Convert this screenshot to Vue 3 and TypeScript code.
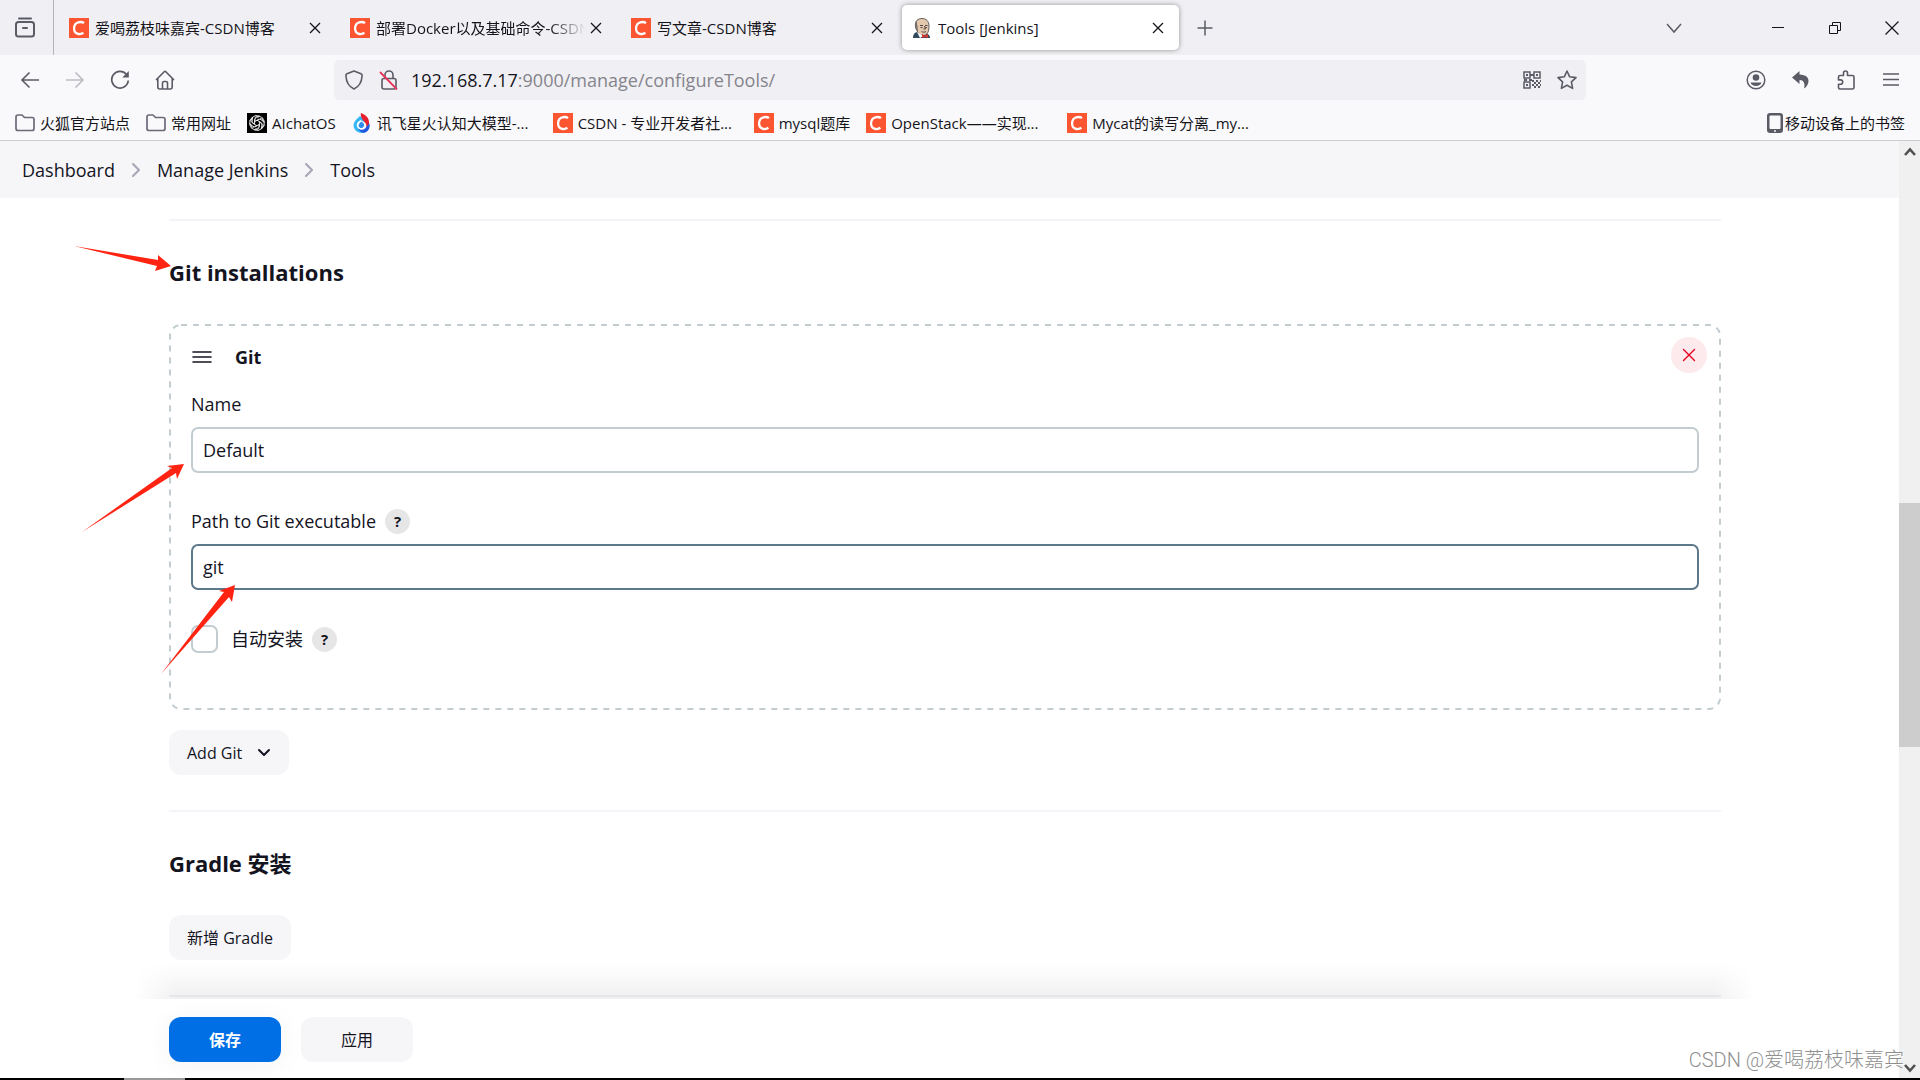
<script setup lang="ts">
import { ref } from 'vue'

interface Tab {
  title: string
  icon: 'csdn' | 'jenkins'
  active?: boolean
  faded?: boolean
}

interface Bookmark {
  title: string
  icon: 'folder' | 'openai' | 'spark' | 'csdn'
  long?: boolean
}

const tabs: Tab[] = [
  { title: '爱喝荔枝味嘉宾-CSDN博客', icon: 'csdn' },
  { title: '部署Docker以及基础命令-CSDN', icon: 'csdn', faded: true },
  { title: '写文章-CSDN博客', icon: 'csdn' },
  { title: 'Tools [Jenkins]', icon: 'jenkins', active: true },
]

const bookmarks: Bookmark[] = [
  { title: '火狐官方站点', icon: 'folder' },
  { title: '常用网址', icon: 'folder' },
  { title: 'AIchatOS', icon: 'openai' },
  { title: '讯飞星火认知大模型-...', icon: 'spark', long: true },
  { title: 'CSDN - 专业开发者社...', icon: 'csdn', long: true },
  { title: 'mysql题库', icon: 'csdn' },
  { title: 'OpenStack——实现...', icon: 'csdn', long: true },
  { title: 'Mycat的读写分离_my...', icon: 'csdn', long: true },
]

const crumbs = ['Dashboard', 'Manage Jenkins', 'Tools']

const name = ref('Default')
const gitPath = ref('git')
const autoInstall = ref(false)
</script>

<template>
  <div class="browser">
    <header class="tabstrip">
      <button class="recent" aria-label="Recent">
        <svg width="22" height="22" viewBox="0 0 22 22" fill="none" stroke="#5b5b66" stroke-width="2" stroke-linecap="round">
          <path d="M5 1.5h12" />
          <rect x="2" y="5" width="18" height="14.5" rx="2.5" />
          <path d="M9 11h4" />
        </svg>
      </button>
      <div class="tabs">
        <div v-for="tab in tabs" :key="tab.title" class="tab" :class="{ active: tab.active }">
          <svg v-if="tab.icon === 'csdn'" class="fav" viewBox="0 0 20 20">
            <rect width="20" height="20" fill="#fc5531" />
            <path d="M15 5.2C12.5 3.2 5.6 3.4 5.1 9.8c-.4 6.4 6 7.4 9.3 5" fill="none" stroke="#fff" stroke-width="2.3" />
          </svg>
          <svg v-else class="fav" viewBox="0 0 20 20">
            <path d="M1 20c0-4 2-6 5-6l8 1c3 1 4 3 4 5z" fill="#33495c" />
            <path d="M3.500 9C2.500 3 6 .5 10 .5S17 3 17 8c0 6-2 9-5 9.500S5 15 3.500 9z" fill="#e3c8ae" stroke="#413b39" stroke-width=".8" />
            <path d="M4 11C2.500 8 3 4 5 2.500 5 5 4.800 6 5.500 8L6 14z" fill="#77706b" />
            <path d="M8 7.500h3M13 7.500h2.500M9.500 13.500c1.500 1 3.500.8 4.500 0M12.500 8l1 3h-2M8.500 9.500h2M13.500 9.500h1.500" fill="none" stroke="#413b39" stroke-width=".9" />
            <path d="M5 14l3 6 3-2-4-3z" fill="#fff" />
            <path d="M10 16l3 1.500 3-1.500v4l-3-1-3 1z" fill="#d33833" />
          </svg>
          <span class="tab-title" :class="{ faded: tab.faded }">{{ tab.title }}</span>
          <button class="tab-close" aria-label="Close tab">
            <svg width="12" height="12" viewBox="0 0 12 12" stroke="#15141a" stroke-width="1.300"><path d="M1 1l10 10M11 1L1 11" /></svg>
          </button>
        </div>
        <button class="tab-new" aria-label="New tab">
          <svg width="16" height="16" viewBox="0 0 16 16" stroke="#5b5b66" stroke-width="1.500"><path d="M8 .5v15M.5 8h15" /></svg>
        </button>
      </div>
      <div class="window-controls">
        <button class="all-tabs" aria-label="List all tabs">
          <svg width="16" height="16" viewBox="0 0 16 16" fill="none" stroke="#5b5b66" stroke-width="1.500"><path d="M1 4l7 8 7-8" /></svg>
        </button>
        <button aria-label="Minimize">
          <svg width="14" height="14" viewBox="0 0 14 14" stroke="#15141a"><path d="M1 6.500h12" /></svg>
        </button>
        <button aria-label="Restore">
          <svg width="14" height="14" viewBox="0 0 14 14" fill="none" stroke="#15141a"><path d="M1.500 4.500h8v8h-8zM4.500 4.500v-3h8v8h-3" /></svg>
        </button>
        <button aria-label="Close">
          <svg width="14" height="14" viewBox="0 0 14 14" stroke="#15141a" stroke-width="1.200"><path d="M.5 .5l13 13M13.500 .5l-13 13" /></svg>
        </button>
      </div>
    </header>

    <div class="toolbar">
      <div class="tool-group">
        <button aria-label="Back">
          <svg width="20" height="20" viewBox="0 0 20 20" fill="none" stroke="#5b5b66" stroke-width="1.600"><path d="M19 10H2M9.500 2.500L2 10l7.500 7.500" /></svg>
        </button>
        <button aria-label="Forward">
          <svg width="20" height="20" viewBox="0 0 20 20" fill="none" stroke="#bcbcc3" stroke-width="1.600"><path d="M1 10h17M10.500 2.500L18 10l-7.500 7.500" /></svg>
        </button>
        <button aria-label="Reload">
          <svg width="20" height="20" viewBox="0 0 20 20" fill="none" stroke="#5b5b66" stroke-width="1.700">
            <path d="M16.500 4.500A8.300 8.300 0 1 0 18.300 10.500" />
            <path d="M18.800 1v6.500h-6.500z" fill="#5b5b66" stroke="none" />
          </svg>
        </button>
        <button aria-label="Home">
          <svg width="20" height="20" viewBox="0 0 20 20" fill="none" stroke="#5b5b66" stroke-width="1.600" stroke-linejoin="round">
            <path d="M1 10l8.200-8.300a1.200 1.200 0 0 1 1.600 0L19 10M2.800 8.500V17a2 2 0 0 0 2 2h10.400a2 2 0 0 0 2-2V8.500M7.500 19v-6a1.500 1.500 0 0 1 1.500-1.500h2a1.500 1.500 0 0 1 1.500 1.500v6" />
          </svg>
        </button>
      </div>

      <div class="urlbar">
        <svg class="shield" width="20" height="20" viewBox="0 0 20 20" fill="none" stroke="#5b5b66" stroke-width="1.600" stroke-linejoin="round">
          <path d="M10 1l7 2.800c1 .4 1.200 1 1.100 2-.4 6.200-3.100 11-8.100 13.200C5 16.800 2.300 12 1.900 5.800c-.1-1 .1-1.600 1.100-2z" />
        </svg>
        <svg class="lock" width="20" height="20" viewBox="0 0 20 20" fill="none" stroke="#5b5b66" stroke-width="1.600">
          <path d="M6 8V5a4 4 0 0 1 8 0v3" />
          <rect x="3" y="8.500" width="14" height="10.500" rx="2" />
          <path d="M1 2l17 17.500" stroke="#e8335b" stroke-width="1.800" />
        </svg>
        <span class="url">192.168.7.17<span class="url-rest">:9000/manage/configureTools/</span></span>
        <svg class="qr" width="18" height="18" viewBox="0 0 18 18" fill="none" stroke="#5b5b66" stroke-width="1.500">
          <path d="M1 1h6v6H1zM11 1h6v6h-6zM1 11h6v6H1z" />
          <path d="M3 4h2M13 4h2M3 14h2M7 4h4M1 9h3M6 9h3" stroke-width="2" />
          <path d="M9 10h9M9 14h9" stroke-width="2" stroke-dasharray="2 2" />
          <path d="M9 12h9M9 16h9" stroke-width="2" stroke-dasharray="2 2" stroke-dashoffset="2" />
        </svg>
        <svg width="20" height="20" viewBox="0 0 20 20" fill="none" stroke="#5b5b66" stroke-width="1.600" stroke-linejoin="round">
          <path d="M10 1l2.700 5.800 6.300.8-4.600 4.300 1.200 6.500L10 15.300l-5.600 3.100 1.200-6.500L1 7.600l6.300-.8z" />
        </svg>
      </div>

      <div class="tool-group">
        <button aria-label="Account">
          <svg width="20" height="20" viewBox="0 0 20 20" fill="#5b5b66">
            <circle cx="10" cy="10" r="8.800" fill="none" stroke="#5b5b66" stroke-width="1.500" />
            <circle cx="10" cy="7.500" r="3.300" />
            <path d="M4.500 12.500h11c-.5 2.200-3 3.500-5.500 3.500s-5-1.300-5.500-3.500z" />
          </svg>
        </button>
        <button aria-label="Undo">
          <svg width="20" height="20" viewBox="0 0 20 20" fill="#5b5b66">
            <path d="M8.500 1L1 7.500 8.500 14v-4c4 0 6 3 4.500 8.500 5.500-3.500 8-13.500-4.500-14z" />
          </svg>
        </button>
        <button aria-label="Extensions">
          <svg width="20" height="20" viewBox="0 0 20 20" fill="none" stroke="#5b5b66" stroke-width="1.600" stroke-linejoin="round">
            <path d="M2.500 8V7a1.500 1.500 0 0 1 1.500-1.500h3.500V3a2 2 0 0 1 4 0v2.500h5A1.500 1.500 0 0 1 18 7v10.500a1.500 1.500 0 0 1-1.500 1.500H4a1.500 1.500 0 0 1-1.500-1.500v-3.200h2a2.200 2.200 0 0 0 0-4.400h-2z" />
          </svg>
        </button>
        <button aria-label="Menu">
          <svg width="16" height="16" viewBox="0 0 16 16" stroke="#5b5b66" stroke-width="1.500"><path d="M0 2h16M0 7.500h16M0 13h16" /></svg>
        </button>
      </div>
    </div>

    <nav class="bookmarks">
      <a v-for="mark in bookmarks" :key="mark.title" class="bookmark" href="#">
        <svg v-if="mark.icon === 'folder'" class="fav" viewBox="0 0 20 20" fill="none" stroke="#6b6a77" stroke-width="1.700" stroke-linejoin="round">
          <path d="M1 15.500V4a2 2 0 0 1 2-2h4l2.500 2.500H17a2 2 0 0 1 2 2v9a2 2 0 0 1-2 2H3a2 2 0 0 1-2-2z" />
        </svg>
        <svg v-else-if="mark.icon === 'openai'" class="fav" viewBox="0 0 20 20" fill="none" stroke="#fff" stroke-width=".8">
          <rect width="20" height="20" fill="#000" stroke="none" />
          <path v-for="n in 6" :key="n" d="M8 9V5.500a3 3 0 0 1 5.200-1.800M8 5.500l4.500-2.300 3.500 2v3.500M10.500 7.500l4 2.300" :transform="`rotate(${n * 60} 10 10)`" />
        </svg>
        <svg v-else-if="mark.icon === 'spark'" class="fav" viewBox="0 0 20 20">
          <path d="M8 3C4 6.500 1.500 9 1.500 12.500A7.800 7.500 0 0 0 9.500 20a8 7.500 0 0 0 8-7.500c0-1-.2-2-.6-3z" fill="#35b7f5" />
          <path d="M14 11.500c.5 4-4 6-8 4.500 2 2.500 4 4 6.500 3.700 3.500-1 5.500-4 5-8.200l-.8-2z" fill="#2457e0" />
          <path d="M8.500 7C5.500 9 4.500 10.500 4.800 12.500c.5 3 2.700 4.300 5 4.300 3.500 0 5.500-3 4.500-6.500L10 8z" fill="#fff" />
          <path d="M9.500 8.500c-2.500 2-3.300 3.200-2.800 4.800.5 1.500 1.800 1.900 3 1.700 2.500-.5 3-3 1.800-4.700z" fill="#2f8df0" />
          <path d="M8.800 0c5.500 2 8.500 5 8.200 10-.3 1.500-1 2.800-2.300 3.500C15 9 8 7 8.800 0z" fill="#e9202d" />
        </svg>
        <svg v-else class="fav" viewBox="0 0 20 20">
          <rect width="20" height="20" fill="#fc5531" />
          <path d="M15 5.200C12.500 3.200 5.600 3.400 5.100 9.800c-.4 6.400 6 7.400 9.300 5" fill="none" stroke="#fff" stroke-width="2.300" />
        </svg>
        <span :class="{ long: mark.long }">{{ mark.title }}</span>
      </a>
      <a class="bookmark mobile" href="#">
        <svg width="16" height="20" viewBox="0 0 16 20">
          <rect width="16" height="20" rx="3" fill="#5b5b66" />
          <rect x="2.500" y="2.500" width="11" height="13.500" rx="1" fill="#f9f9fb" />
          <rect x="7" y="17.300" width="2" height="1.400" fill="#f9f9fb" />
        </svg>
        <span>移动设备上的书签</span>
      </a>
    </nav>

    <div class="viewport">
      <div class="page">
        <nav class="breadcrumbs">
          <template v-for="(crumb, i) in crumbs" :key="crumb">
            <svg v-if="i > 0" width="10" height="16" viewBox="0 0 10 16" fill="none" stroke="#a5a5b5" stroke-width="2" stroke-linecap="round" stroke-linejoin="round">
              <path d="M2 2l6 6-6 6" />
            </svg>
            <a href="#">{{ crumb }}</a>
          </template>
        </nav>

        <main>
          <section>
            <h2>Git installations</h2>
            <div class="card">
              <svg class="card-outline" fill="none" stroke="#c3ccd1" stroke-width="2" stroke-dasharray="6 6">
                <rect x="1" y="1" rx="11" />
              </svg>
              <div class="card-head">
                <svg width="22" height="14" viewBox="0 0 22 14" stroke="#14141f" stroke-width="1.600" stroke-linecap="round"><path d="M2 2h18M2 7h18M2 12h18" /></svg>
                <strong>Git</strong>
                <button class="remove" aria-label="Remove Git">
                  <svg width="14" height="14" viewBox="0 0 14 14" stroke="#e6001f" stroke-width="1.400" stroke-linecap="round"><path d="M1.500 1.500l11 11M12.500 1.500l-11 11" /></svg>
                </button>
              </div>
              <div class="field">
                <div class="field-label"><label for="git-name">Name</label></div>
                <input id="git-name" v-model="name" type="text" />
              </div>
              <div class="field">
                <div class="field-label">
                  <label for="git-path">Path to Git executable</label>
                  <button class="help" aria-label="Help for path">?</button>
                </div>
                <input id="git-path" v-model="gitPath" class="focused" type="text" />
              </div>
              <div class="check">
                <input id="git-auto" v-model="autoInstall" type="checkbox" />
                <label for="git-auto">自动安装</label>
                <button class="help" aria-label="Help for automatic install">?</button>
              </div>
            </div>
            <button class="soft">
              Add Git
              <svg width="14" height="10" viewBox="0 0 14 10" fill="none" stroke="#14141f" stroke-width="2" stroke-linecap="round" stroke-linejoin="round"><path d="M2 2l5 5 5-5" /></svg>
            </button>
          </section>
          <section>
            <h2>Gradle 安装</h2>
            <button class="soft">新增 Gradle</button>
          </section>
          <hr />
        </main>

        <footer class="actions">
          <button class="soft primary">保存</button>
          <button class="soft apply">应用</button>
        </footer>

        <svg class="annotations" width="300" height="600" viewBox="0 141 300 600" fill="#ff2412">
          <path d="M74 246l84 14v-5l13 11-16 5 2-5z" />
          <path d="M82 532l90-64-5-2 17-2-7 15-1-6z" />
          <path d="M161 674l63-82-5-1 16-6-3 17-3-5z" />
        </svg>
      </div>

      <div class="scrollbar">
        <button aria-label="Scroll up">
          <svg width="12" height="10" viewBox="0 0 12 10" fill="none" stroke="#505050" stroke-width="2.600"><path d="M1 8l5-5.500L11 8" /></svg>
        </button>
        <div class="track">
          <div class="thumb"></div>
        </div>
        <button aria-label="Scroll down">
          <svg width="12" height="10" viewBox="0 0 12 10" fill="none" stroke="#505050" stroke-width="2.600"><path d="M1 2l5 5.500L11 2" /></svg>
        </button>
      </div>
    </div>

    <div class="taskbar-edge"><div class="taskbar-item"></div></div>
    <div class="watermark">CSDN @爱喝荔枝味嘉宾</div>
  </div>
</template>

<style>
body {
  margin: 0;
}
</style>

<style scoped>
.browser {
  position: relative;
  display: flex;
  flex-direction: column;
  min-height: 100vh;
  background: #fff;
  color: #15141a;
  font-family: 'Open Sans', 'Noto Sans CJK SC', sans-serif;
  font-size: 15px;
  line-height: 20px;
}

.browser *,
.browser *::before {
  box-sizing: border-box;
}

svg {
  display: block;
  flex: none;
}

button {
  display: flex;
  align-items: center;
  justify-content: center;
  padding: 0;
  border: 0;
  background: none;
  color: inherit;
  font: inherit;
}

a {
  color: inherit;
  text-decoration: none;
}

.fav {
  width: 20px;
  height: 20px;
}

.tabstrip {
  display: flex;
  height: 55px;
  background: #f0f0f4;
}

.recent {
  width: 54px;
  padding-right: 4px;
  border-right: 1px solid #b3b3ba;
}

.tabs {
  display: flex;
  flex: 1;
  align-items: center;
  gap: 4px;
  min-width: 0;
  padding-left: 5px;
}

.tab {
  display: flex;
  align-items: center;
  gap: 6px;
  width: 277px;
  height: 45px;
  padding: 0 11px 0 10px;
  border-radius: 5px;
}

.tab.active {
  background: #fff;
  box-shadow: 0 0 5px rgba(0, 0, 0, 0.4);
}

.tab-title {
  flex: 1;
  overflow: hidden;
  white-space: nowrap;
}

.tab-title.faded {
  mask-image: linear-gradient(to left, transparent, #000 36px);
}

.tab-close {
  width: 20px;
  height: 20px;
  margin-left: -6px;
}

.tab-new {
  width: 44px;
  height: 44px;
}

.window-controls {
  display: flex;
}

.window-controls button {
  width: 57px;
}

.window-controls .all-tabs {
  width: 54px;
  margin-right: 48px;
}

.toolbar {
  display: flex;
  align-items: center;
  height: 50px;
  padding: 0 7px;
  background: #f9f9fb;
}

.tool-group {
  display: flex;
}

.tool-group button {
  width: 45px;
  height: 40px;
}

.urlbar {
  display: flex;
  flex: 1;
  align-items: center;
  height: 40px;
  margin: 0 147px;
  padding: 0 9px 0 10px;
  border-radius: 5px;
  background: #f0f0f4;
  font-size: 18px;
}

.lock {
  margin: 0 12px 0 15px;
}

.url {
  flex: 1;
  white-space: nowrap;
}

.url-rest {
  color: #85848b;
}

.qr {
  margin-right: 16px;
}

.bookmarks {
  display: flex;
  align-items: center;
  gap: 16px;
  height: 36px;
  padding: 0 15px;
  border-bottom: 1px solid #ccc;
  background: #f9f9fb;
}

.bookmark {
  display: flex;
  align-items: center;
  gap: 5px;
  white-space: nowrap;
}

.long {
  width: 160px;
}

.mobile {
  gap: 2px;
  margin-left: auto;
}

.viewport {
  display: flex;
  flex: 1;
}

.page {
  position: relative;
  display: flex;
  flex: 1;
  flex-direction: column;
  min-width: 0;
  color: #14141f;
}

.breadcrumbs {
  display: flex;
  align-items: center;
  gap: 16px;
  height: 57px;
  padding-left: 22px;
  background: #f6f6f9;
  font-size: 18px;
}

main {
  flex: 1;
  padding: 21px 178px 0 169px;
}

section {
  padding: 36px 0 35px;
  border-top: 2px solid #f3f3f8;
}

hr {
  height: 2px;
  margin: 0 0 2px;
  border: 0;
  background: #f3f3f8;
}

h2 {
  margin: 0 0 36px;
  font-size: 22px;
  font-weight: 700;
  line-height: 31px;
}

.card {
  position: relative;
  margin-bottom: 20px;
  padding: 13px 22px 57px;
  font-size: 18px;
  line-height: 24px;
}

.card-outline {
  position: absolute;
  inset: 0;
  width: 100%;
  height: 100%;
  pointer-events: none;
}

.card-outline rect {
  width: calc(100% - 2px);
  height: calc(100% - 2px);
}

.card-head {
  display: flex;
  align-items: center;
  gap: 22px;
  height: 40px;
}

.remove {
  align-self: flex-start;
  width: 36px;
  height: 36px;
  margin-right: -8px;
  margin-left: auto;
  border-radius: 50%;
  background: #fdeaec;
}

.field {
  margin-top: 15px;
}

.field + .field {
  margin-top: 36px;
}

.field-label {
  display: flex;
  align-items: center;
  gap: 9px;
  height: 24px;
  margin-bottom: 11px;
}

input[type='text'] {
  display: block;
  width: 100%;
  height: 46px;
  padding: 0 10px;
  border: 2px solid #c3ccd1;
  border-radius: 7px;
  outline: 0;
  background: #fff;
  color: inherit;
  font: inherit;
}

input[type='text'].focused {
  border-color: #5d7889;
}

.help {
  width: 25px;
  height: 25px;
  border-radius: 50%;
  background: #e6e6e6;
  font-size: 15px;
  font-weight: 700;
}

.check {
  display: flex;
  align-items: center;
  height: 28px;
  margin-top: 35px;
}

.check input {
  width: 27px;
  height: 28px;
  margin: 0 13px 0 0;
  border: 2px solid #c3ccd1;
  border-radius: 7px;
  appearance: none;
  background: #fff;
}

.check .help {
  margin-left: 9px;
}

.soft {
  gap: 15px;
  height: 45px;
  padding: 0 18px;
  border-radius: 12px;
  background: #f6f6f9;
  font-size: 16px;
}

.actions {
  position: relative;
  display: flex;
  gap: 20px;
  padding: 18px 169px 16px;
  background: #fff;
}

.actions::before {
  position: absolute;
  right: 145px;
  bottom: 100%;
  left: 135px;
  height: 36px;
  background: linear-gradient(to top, rgba(0, 0, 0, 0.06), transparent);
  content: '';
  mask-image: linear-gradient(to right, transparent, #000 40px, #000 calc(100% - 40px), transparent);
}

.actions .soft {
  width: 112px;
}

.actions .primary {
  background: #006fe6;
  box-shadow: 0 4px 28px rgba(0, 0, 0, 0.05);
  color: #fff;
  font-weight: 700;
}

.annotations {
  position: absolute;
  top: 0;
  left: 0;
  pointer-events: none;
}

.scrollbar {
  display: flex;
  flex-direction: column;
  width: 21px;
  background: #f0f0f0;
}

.scrollbar button {
  width: 21px;
  height: 21px;
}

.track {
  display: flex;
  flex: 1;
  flex-direction: column;
}

.track::before {
  flex: 341;
  content: '';
}

.track::after {
  flex: 310;
  content: '';
}

.thumb {
  flex: 244;
  background: #cdcdcd;
}

.taskbar-edge {
  height: 2px;
  padding-left: 124px;
  background: #000;
}

.taskbar-item {
  width: 61px;
  height: 2px;
  background: #999;
}

.watermark {
  position: absolute;
  right: 16px;
  bottom: 8px;
  color: #8f8f8f;
  font-family: Roboto, 'Noto Sans CJK SC', sans-serif;
  font-size: 20px;
  font-weight: 300;
  line-height: 24px;
  text-shadow: 1px 1px 0 #fff;
  white-space: nowrap;
}
</style>
